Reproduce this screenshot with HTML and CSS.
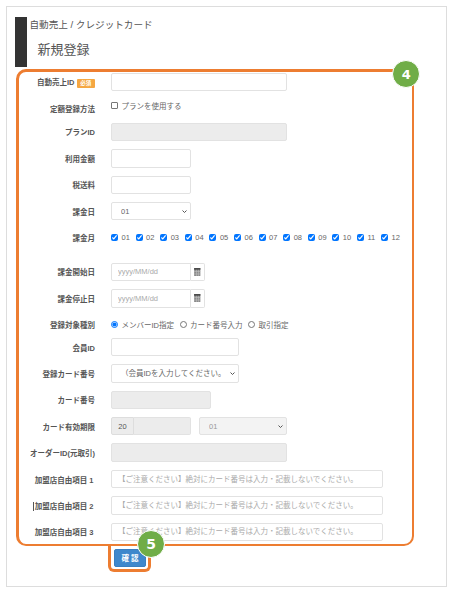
FILE: index.html
```html
<!DOCTYPE html>
<html lang="ja">
<head>
    <meta charset="UTF-8">
    <meta name="viewport" content="width=device-width, initial-scale=1.0">
    <title>新規登録</title>
    <link rel="stylesheet" href="styles.css">
</head>
<body>

<div class="frame">
    <div class="header">
        <div class="header-bar"></div>
        <div class="header-text">
            <div class="breadcrumb">自動売上 / クレジットカード</div>
            <h1 class="title">新規登録</h1>
        </div>
    </div>

    <form class="form-box">
        <span class="step step-4">4</span>

        <div class="row">
            <label class="label">自動売上ID <span class="required">必須</span></label>
            <input type="text" class="field w-176">
        </div>
        <div class="row row-check row-tight">
            <label class="label">定額登録方法</label>
            <label class="option"><input type="checkbox" class="plain-check">プランを使用する</label>
        </div>
        <div class="row">
            <label class="label">プランID</label>
            <input type="text" class="field w-176" disabled>
        </div>
        <div class="row">
            <label class="label">利用金額</label>
            <input type="text" class="field w-80">
        </div>
        <div class="row">
            <label class="label">税送料</label>
            <input type="text" class="field w-80">
        </div>
        <div class="row">
            <label class="label">課金日</label>
            <select class="field select w-80"><option>01</option></select>
        </div>
        <div class="row row-check row-months">
            <label class="label">課金月</label>
            <div class="months">
                <label class="option"><input type="checkbox" checked>01</label>
                <label class="option"><input type="checkbox" checked>02</label>
                <label class="option"><input type="checkbox" checked>03</label>
                <label class="option"><input type="checkbox" checked>04</label>
                <label class="option"><input type="checkbox" checked>05</label>
                <label class="option"><input type="checkbox" checked>06</label>
                <label class="option"><input type="checkbox" checked>07</label>
                <label class="option"><input type="checkbox" checked>08</label>
                <label class="option"><input type="checkbox" checked>09</label>
                <label class="option"><input type="checkbox" checked>10</label>
                <label class="option"><input type="checkbox" checked>11</label>
                <label class="option"><input type="checkbox" checked>12</label>
            </div>
        </div>
        <div class="row">
            <label class="label">課金開始日</label>
            <div class="group">
                <input type="text" class="field group-input w-80" placeholder="yyyy/MM/dd">
                <span class="addon"><svg class="cal" viewBox="0 0 7 9"><path d="M0 0h7v9H0z" fill="#8a8a8a"/><path d="M0 0h7v2H0z" fill="#4a4a4a"/><path d="M0 4h7v.6H0zM0 6.4h7V7H0zM2.1 2h.6v7h-.6zM4.3 2h.6v7h-.6z" fill="#c4c4c4"/></svg></span>
            </div>
        </div>
        <div class="row">
            <label class="label">課金停止日</label>
            <div class="group">
                <input type="text" class="field group-input w-80" placeholder="yyyy/MM/dd">
                <span class="addon"><svg class="cal" viewBox="0 0 7 9"><path d="M0 0h7v9H0z" fill="#8a8a8a"/><path d="M0 0h7v2H0z" fill="#4a4a4a"/><path d="M0 4h7v.6H0zM0 6.4h7V7H0zM2.1 2h.6v7h-.6zM4.3 2h.6v7h-.6z" fill="#c4c4c4"/></svg></span>
            </div>
        </div>
        <div class="row row-check row-radio">
            <label class="label">登録対象種別</label>
            <div class="radios">
                <label class="option"><input type="radio" name="target" checked>メンバーID指定</label>
                <label class="option"><input type="radio" name="target">カード番号入力</label>
                <label class="option"><input type="radio" name="target">取引指定</label>
            </div>
        </div>
        <div class="row">
            <label class="label">会員ID</label>
            <input type="text" class="field w-128">
        </div>
        <div class="row">
            <label class="label">登録カード番号</label>
            <select class="field select w-128"><option>（会員IDを入力してください。</option></select>
        </div>
        <div class="row">
            <label class="label">カード番号</label>
            <input type="text" class="field w-100" disabled>
        </div>
        <div class="row">
            <label class="label">カード有効期限</label>
            <div class="group">
                <span class="addon addon-left">20</span>
                <input type="text" class="field group-input-right" disabled>
            </div>
            <select class="field select expiry-month" disabled><option>01</option></select>
        </div>
        <div class="row">
            <label class="label">オーダーID(元取引)</label>
            <input type="text" class="field w-176" disabled>
        </div>
        <div class="row">
            <label class="label label-free">加盟店自由項目 1</label>
            <input type="text" class="field w-272" placeholder="【ご注意ください】絶対にカード番号は入力・記載しないでください。">
        </div>
        <div class="row">
            <label class="label label-free"><span class="caret">加盟店自由項目 2</span></label>
            <input type="text" class="field w-272" placeholder="【ご注意ください】絶対にカード番号は入力・記載しないでください。">
        </div>
        <div class="row">
            <label class="label label-free">加盟店自由項目 3</label>
            <input type="text" class="field w-272" placeholder="【ご注意ください】絶対にカード番号は入力・記載しないでください。">
        </div>
    </form>

    <div class="actions">
        <div class="confirm-ring">
            <button type="button" class="confirm">確 認</button>
            <span class="step step-5">5</span>
        </div>
    </div>
</div>

</body>
</html>
```

FILE: styles.css
```css
* {
    box-sizing: border-box;
}

body {
    margin: 0;
    background-color: #fff;
    font-family: "Liberation Sans", "Noto Sans CJK JP", sans-serif;
    color: #555;
}

.frame {
    width: 441px;
    height: 580.5px;
    margin: 6px 0 0 6px;
    padding-top: 10px;
    border: 1px solid #ddd;
}

.header {
    display: flex;
    height: 50px;
    margin-left: 8px;
}

.header-bar {
    width: 11.5px;
    background-color: #333;
}

.header-text {
    padding-left: 3px;
}

.breadcrumb {
    height: 16px;
    font-size: 9.6px;
    line-height: 16px;
}

.title {
    margin: 8px 0 0 8px;
    font-size: 13px;
    font-weight: normal;
    line-height: 18px;
}

.form-box {
    position: relative;
    width: 398px;
    height: 477.3px;
    margin: 2px 0 0 9px;
    padding-top: 1px;
    border: solid #ed7d31;
    border-width: 3px 2px 2.3px 3px;
    border-radius: 10px;
}

.row {
    display: flex;
    align-items: center;
    height: 18.4px;
    margin-bottom: 8px;
}

.row-tight {
    margin-top: -3px;
}

.row-tight .label {
    padding-top: 6px;
}

.row-months {
    margin-bottom: 16px;
}

.row-radio {
    margin-bottom: 4px;
}

.label {
    flex: none;
    width: 76px;
    margin-right: 16px;
    font-size: 7.5px;
    font-weight: bold;
    text-align: right;
    white-space: nowrap;
}

.label-free {
    padding-right: 1.5px;
}

.caret {
    padding-left: 0.5px;
    border-left: 1px solid #555;
}

.required {
    display: inline-block;
    width: 18.5px;
    height: 9.2px;
    border-radius: 1px;
    background-color: #f5a742;
    color: #fff;
    font-size: 5.5px;
    line-height: 9.2px;
    text-align: center;
    vertical-align: middle;
}

.field {
    height: 18.4px;
    padding: 0 6px;
    border: 1px solid #e2e2e2;
    border-radius: 2px;
    background-color: #fff;
    color: #666;
    font-family: inherit;
    font-size: 7.5px;
}

.field:disabled {
    background-color: #ececec;
    opacity: 1;
}

.field::placeholder {
    color: #aaa;
}

.select {
    appearance: none;
    padding: 0 9px;
    background-image: url("data:image/svg+xml,%3Csvg xmlns='http://www.w3.org/2000/svg' viewBox='0 0 10 6'%3E%3Cpath d='M1 1l4 4 4-4' fill='none' stroke='%23555' stroke-width='2'/%3E%3C/svg%3E");
    background-repeat: no-repeat;
    background-position: right 3.5px center;
    background-size: 5px 3px;
}

.w-80 {
    width: 80px;
}

.w-100 {
    width: 100px;
}

.w-128 {
    width: 128px;
}

.w-176 {
    width: 176px;
}

.w-272 {
    width: 272px;
}

.option {
    display: inline-flex;
    align-items: center;
    color: #666;
    font-size: 7.5px;
    white-space: nowrap;
}

.option input {
    width: 7px;
    height: 7px;
    margin: 0 3.5px 0 0;
}

.option .plain-check {
    appearance: none;
    border: 0.7px solid #777;
    border-radius: 1px;
    background-color: #fff;
}

.months {
    display: flex;
    gap: 5.75px;
}

.radios {
    display: flex;
    gap: 5.5px;
}

.group {
    display: flex;
}

.group-input {
    border-radius: 2px 0 0 2px;
}

.group-input-right {
    width: 57px;
    border-left: 0;
    border-radius: 0 2px 2px 0;
}

.addon {
    display: flex;
    align-items: center;
    justify-content: center;
    width: 14px;
    height: 18.4px;
    border: 1px solid #e2e2e2;
    border-left: 0;
    border-radius: 0 2px 2px 0;
    background-color: #fff;
}

.addon-left {
    width: 23px;
    border: 1px solid #ddd;
    border-radius: 2px 0 0 2px;
    background-color: #ececec;
    font-size: 7.5px;
}

.cal {
    width: 6.5px;
    height: 8px;
}

.expiry-month {
    width: 88px;
    margin-left: 8px;
    color: #999;
}

.field.expiry-month:disabled {
    background-color: #f3f3f3;
}

.actions {
    margin: 0 0 0 101px;
}

.confirm-ring {
    position: relative;
    width: 43px;
    height: 26px;
    padding: 2.4px 3px;
    border: 3px solid #ed7d31;
    border-top-width: 0;
    border-radius: 0 0 6px 6px;
}

.confirm {
    display: block;
    width: 32px;
    height: 18.6px;
    padding: 0;
    border: 1px solid #3a7fc0;
    border-radius: 2px;
    background-color: #3f88cc;
    color: #fff;
    font-family: inherit;
    font-size: 7.5px;
    font-weight: bold;
}

.step {
    position: absolute;
    display: flex;
    align-items: center;
    justify-content: center;
    width: 28px;
    height: 28px;
    border: 1px solid #fff;
    border-radius: 50%;
    background-color: #70ad47;
    color: #fff;
    font-family: "DejaVu Sans", sans-serif;
    font-weight: bold;
}

.step-4 {
    top: -11.7px;
    left: 373.4px;
    font-size: 13px;
}

.step-5 {
    top: -16px;
    left: 26px;
    font-size: 14px;
}
```
